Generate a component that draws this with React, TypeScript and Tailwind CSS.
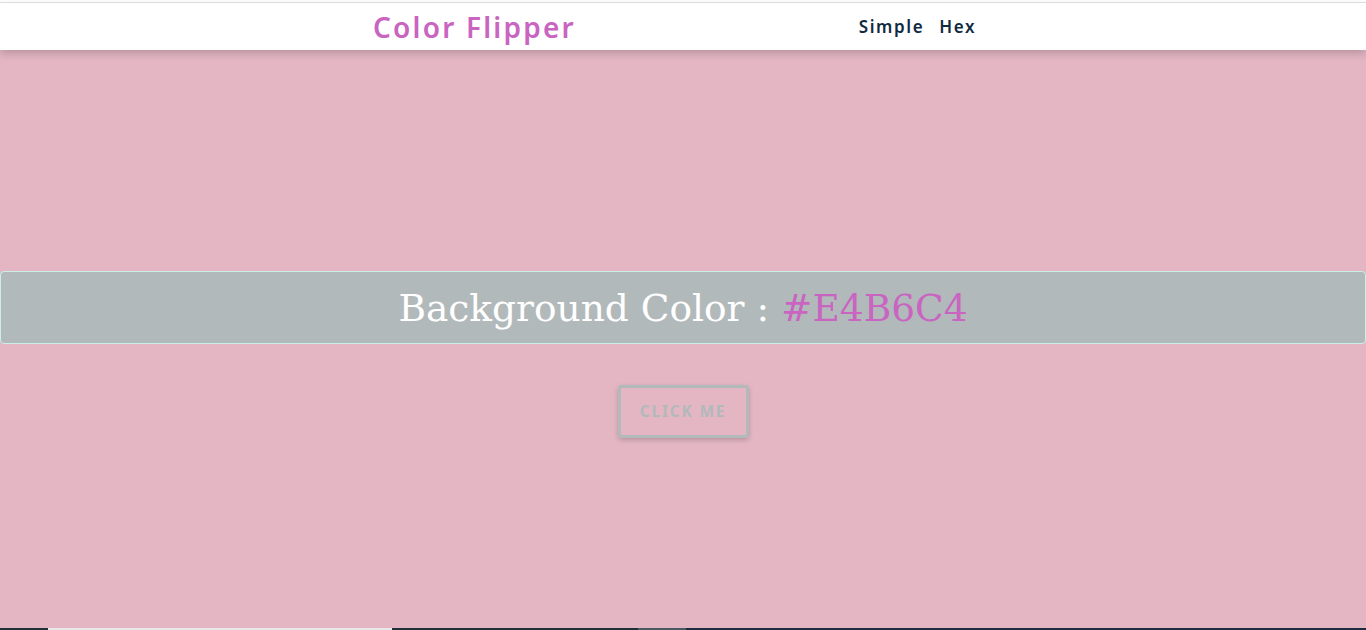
import React, { useState } from "react";

const colors = ["#E4B6C4", "#F15025", "#A3D9FF", "#C7E8CA", "#FFD6A5"];

function Navbar() {
    return (
        <nav className="h-[48px] bg-white border-t border-[#dcdcdc] shadow-[0_4px_8px_rgba(0,0,0,0.18)] relative z-10">
            <div className="mx-auto w-[620px] pr-[17px] h-full flex items-center justify-between">
                <h4 className="text-[28px] font-semibold tracking-[2.2px] text-[#c964c1] font-['Noto_Sans',sans-serif] leading-none">
                    Color Flipper
                </h4>
                <ul className="flex gap-[15px] text-[17px] font-semibold tracking-[1.6px] text-[#102a42] font-['Noto_Sans',sans-serif]">
                    <li><a href="#">Simple</a></li>
                    <li><a href="#">Hex</a></li>
                </ul>
            </div>
        </nav>
    );
}

export default function App() {
    const [idx, setIdx] = useState(0);
    const color = colors[idx];

    return (
        <div className="w-[1366px] h-[630px] flex flex-col overflow-hidden" style={{ backgroundColor: color }}>
            <div className="h-[2px] bg-white"></div>
            <Navbar />
            <main className="flex-1 flex flex-col items-center">
                <div className="mt-[221px] w-full h-[73px] pt-[3px] bg-[#b2b9ba] border border-[#c9efe6] rounded-[4px] flex items-center justify-center">
                    <h2 className="text-[37.5px] text-white font-['DejaVu_Serif',serif] leading-none">
                        Background Color : <span className="text-[#c964c1]">{color}</span>
                    </h2>
                </div>
                <button
                    onClick={() => setIdx((idx + 1) % colors.length)}
                    className="mt-[41px] w-[131px] h-[53px] border-[3px] border-[#b2b9ba] rounded-[4px] text-[#b2b9ba] text-[15.5px] font-bold tracking-[1.8px] font-['Noto_Sans',sans-serif] shadow-[0_2px_5px_rgba(0,0,0,0.2)]"
                >
                    CLICK ME
                </button>
            </main>
            <div className="h-[2px] flex">
                <div className="w-[48px] bg-[#1f3038]"></div>
                <div className="w-[344px] bg-[#e8e8e8]"></div>
                <div className="w-[246px] bg-[#1f3038]"></div>
                <div className="w-[48px] bg-[#4a5a62]"></div>
                <div className="flex-1 bg-[#1f2b3f]"></div>
            </div>
        </div>
    );
}
